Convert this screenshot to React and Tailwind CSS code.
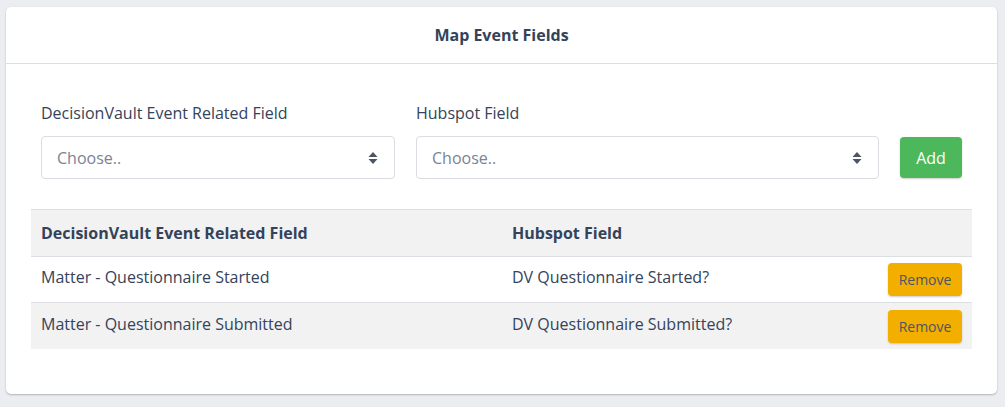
import React from "react";

const Arrows = () => (
  <svg width="10" height="14" viewBox="0 0 10 14" className="shrink-0">
    <path d="M5 1 L9.5 6 H0.5 Z" fill="#4b5563" />
    <path d="M5 13 L9.5 8 H0.5 Z" fill="#4b5563" />
  </svg>
);

const Select = ({ className }) => (
  <div
    className={`flex h-[43px] items-center justify-between rounded-[4px] border border-[#d9dce1] bg-white pl-[15px] pr-[16px] text-[16px] text-[#7a8396] ${className}`}
  >
    <span>Choose..</span>
    <Arrows />
  </div>
);

const rows = [
  ["Matter - Questionnaire Started", "DV Questionnaire Started?"],
  ["Matter - Questionnaire Submitted", "DV Questionnaire Submitted?"],
];

export default function App() {
  return (
    <div
      className="min-h-[407px] w-full bg-[#ebedf0] pl-[6px] pr-[8px] pt-[7px] pb-[13px]"
      style={{ fontFamily: '"Segoe UI", "Open Sans", "Noto Sans", sans-serif' }}
    >
      <div className="h-[387px] rounded-[5px] bg-white shadow-[0_1px_2px_rgba(0,0,0,0.25)]">
        <div className="flex h-[57px] items-center justify-center border-b border-[#dcdfe3] text-[16px] font-bold text-[#34435a]">
          Map Event Fields
        </div>
        <div className="px-[25px] pt-[38px]">
          <div className="flex items-end pl-[10px]">
            <div className="w-[354px]">
              <div className="mb-[12px] text-[16px] leading-[22px] text-[#34435a]">
                DecisionVault Event Related Field
              </div>
              <Select />
            </div>
            <div className="ml-[21px] w-[463px]">
              <div className="mb-[12px] text-[16px] leading-[22px] text-[#34435a]">
                Hubspot Field
              </div>
              <Select />
            </div>
            <button className="mb-[1px] ml-[21px] h-[41px] w-[62px] rounded-[4px] bg-[#4cb85b] text-[16px] text-white shadow-[0_1px_2px_rgba(0,0,0,0.2)]">
              Add
            </button>
          </div>
          <div className="mt-[30px] text-[16px] text-[#34435a]">
            <div className="flex h-[48px] items-center border-y border-[#dcdfe3] bg-[#f2f2f2] font-bold">
              <div className="w-[481px] pl-[10px]">DecisionVault Event Related Field</div>
              <div className="flex-1">Hubspot Field</div>
            </div>
            {rows.map(([a, b], i) => (
              <div
                key={a}
                className={`flex h-[46px] items-center ${i === 0 ? "border-b border-[#dcdfe3] bg-white" : "bg-[#f2f2f2]"}`}
              >
                <div className="-mt-[5px] w-[481px] pl-[10px]">{a}</div>
                <div className="-mt-[5px] flex-1">{b}</div>
                <button className="mr-[10px] h-[33px] w-[74px] rounded-[4px] bg-[#f3af00] text-[14px] text-[#4b5563] shadow-[0_1px_2px_rgba(0,0,0,0.2)]">
                  Remove
                </button>
              </div>
            ))}
          </div>
        </div>
      </div>
    </div>
  );
}
